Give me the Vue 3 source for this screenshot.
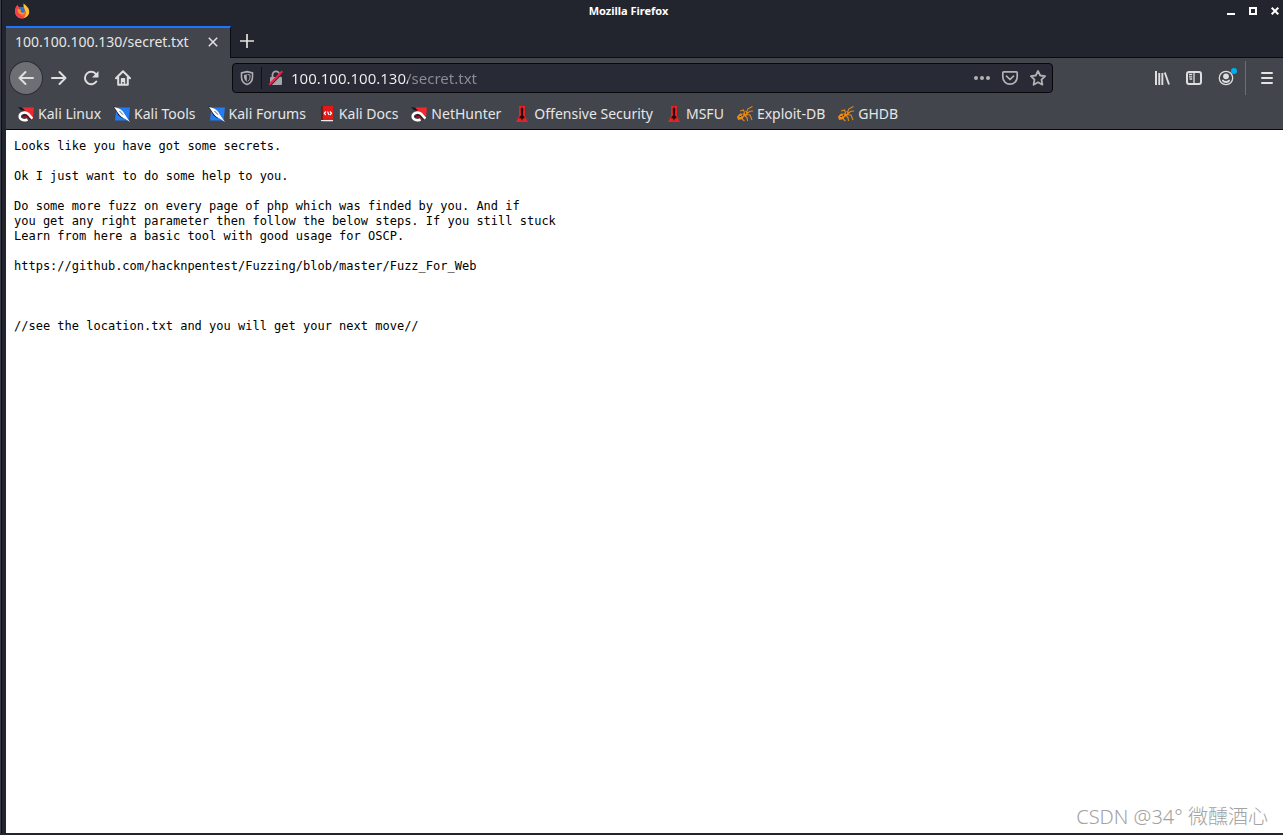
<script setup>
import { ref } from 'vue'

const address = ref('100.100.100.130/secret.txt')

const bookmarks = [
  { label: 'Kali Linux', icon: 'dragon' },
  { label: 'Kali Tools', icon: 'tools' },
  { label: 'Kali Forums', icon: 'tools' },
  { label: 'Kali Docs', icon: 'docs' },
  { label: 'NetHunter', icon: 'dragon' },
  { label: 'Offensive Security', icon: 'offsec' },
  { label: 'MSFU', icon: 'offsec' },
  { label: 'Exploit-DB', icon: 'bug' },
  { label: 'GHDB', icon: 'bug' },
]

const documentText = `Looks like you have got some secrets.

Ok I just want to do some help to you.

Do some more fuzz on every page of php which was finded by you. And if
you get any right parameter then follow the below steps. If you still stuck
Learn from here a basic tool with good usage for OSCP.

https://github.com/hacknpentest/Fuzzing/blob/master/Fuzz_For_Web



//see the location.txt and you will get your next move//`
</script>

<template>
  <div class="window">
    <header class="titlebar">
      <svg class="logo" viewBox="0 0 16 16" aria-hidden="true">
        <path d="M1 8.500C1 5.500 2 3.500 3.500 2L4.500 4L6.500 4.500L12 4L14.500 5.500C16.500 11 12.500 15.500 8 15.500S1 12 1 8.500Z" fill="#ff5a36" />
        <path d="M1 8.500C1 5.500 2 3.500 3.500 2L4.500 4L4 8L7 12.500L11 14.800C6 17 1 13 1 8.500Z" fill="#f0404f" />
        <path d="M9.500 .5C12 2.200 15.200 5 15.200 9C15.200 12 12.500 14.600 9.500 15C12 12.500 12.500 10 11.500 8C10.500 6 9 4 9.500 .5Z" fill="#ffc42c" />
        <path d="M5 4.500C7 3 9.500 4 10.500 6C11.500 8.500 10 10.500 8 10.500C6 10.500 4.500 9 5 7Z" fill="#2673dd" />
        <path d="M3.500 6L7.500 6.800L6.300 8.200L8 9.800L11 9.500C10 12.500 5 12 4 9Z" fill="#ff9226" />
      </svg>
      <h1 class="title">Mozilla Firefox</h1>
      <div class="window-controls">
        <button type="button" aria-label="Minimize">
          <svg viewBox="0 0 8 8"><path d="M0 6h8v2H0z" fill="#fff" /></svg>
        </button>
        <button type="button" aria-label="Maximize">
          <svg viewBox="0 0 8 8"><path d="M1 1h6v6H1z" fill="none" stroke="#fff" stroke-width="2" /></svg>
        </button>
        <button type="button" aria-label="Close window">
          <svg viewBox="0 0 8 8"><path d="M.7.7l6.600 6.600M7.300.7L.7 7.300" stroke="#fff" stroke-width="2" /></svg>
        </button>
      </div>
    </header>

    <div class="tabs">
      <div class="tab">
        <span class="tab-label">100.100.100.130/secret.txt</span>
        <button type="button" class="tab-close" aria-label="Close tab">
          <svg viewBox="0 0 10 10"><path d="M.8.8l8.400 8.400M9.200.8L.8 9.200" stroke="#e2e2e2" stroke-width="1.500" /></svg>
        </button>
      </div>
      <button type="button" class="new-tab" aria-label="New tab">
        <svg viewBox="0 0 14 14"><path d="M7 0v14M0 7h14" stroke="#e2e2e2" stroke-width="1.700" /></svg>
      </button>
    </div>

    <nav class="toolbar" aria-label="Navigation">
      <div class="nav-group">
        <button type="button" class="tool back" aria-label="Back">
          <svg viewBox="0 0 16 16"><path d="M15 8H1.500M7.500 2L1.500 8l6 6" class="line" /></svg>
        </button>
        <button type="button" class="tool" aria-label="Forward">
          <svg viewBox="0 0 16 16"><path d="M1 8h13.500M8.500 2l6 6-6 6" class="line" /></svg>
        </button>
        <button type="button" class="tool" aria-label="Reload">
          <svg viewBox="0 0 16 16">
            <path d="M13.300 11.500A6.200 6.200 0 1 1 13 4.200" class="line" />
            <path d="M15.500 1v6.500H9z" fill="#dededf" />
          </svg>
        </button>
        <button type="button" class="tool" aria-label="Home">
          <svg viewBox="0 0 16 16">
            <path d="M1 8.200L8 1.300l7 6.900M3.200 7v7.700h9.600V7" class="line" />
            <path d="M5.800 14V9q0-1 1-1h2.400q1 0 1 1v5H8.700v-2H7.300v2z" fill="#dededf" />
          </svg>
        </button>
      </div>

      <form class="urlbar" @submit.prevent>
        <button type="button" class="mini shield" aria-label="Tracking protection">
          <svg viewBox="0 0 16 16">
            <path d="M8 1.600l5.500 1.300v4C13.500 10.500 11 13.500 8 14.500 5 13.500 2.500 10.500 2.500 6.900v-4z" fill="none" stroke="#aeaeb2" stroke-width="1.600" />
            <path d="M7.800 4.200v7.500C6 10.500 5 8.800 5 6.800V4.900z" fill="#aeaeb2" />
            <path d="M8.500 4.400l2.500.6v2c0 2-1 3.700-2.500 4.700" fill="none" stroke="#aeaeb2" />
          </svg>
        </button>
        <button type="button" class="mini lock" aria-label="Connection is not secure">
          <svg viewBox="0 0 16 16">
            <path d="M4.500 8V4.800a3.500 3.500 0 0 1 7 0V8" fill="none" stroke="#a5a5aa" stroke-width="1.800" />
            <rect x="2" y="7" width="12" height="8" rx="1" fill="#a5a5aa" />
            <path d="M2.300 15.500L15 2.500" stroke="#282a35" stroke-width="1.500" />
            <path d="M1.300 14.800L14.300 1.300" stroke="#f02046" stroke-width="2" />
          </svg>
        </button>
        <input v-model="address" class="address" type="text" aria-label="Address" spellcheck="false" />
        <div class="page-actions">
          <button type="button" class="mini" aria-label="Page actions">
            <svg viewBox="0 0 16 16" fill="#b2b2b5"><circle cx="2" cy="8" r="2" /><circle cx="8" cy="8" r="2" /><circle cx="14" cy="8" r="2" /></svg>
          </button>
          <button type="button" class="mini" aria-label="Save to Pocket">
            <svg viewBox="0 0 16 16" fill="none" stroke="#b2b2b5" stroke-width="1.700" stroke-linejoin="round" stroke-linecap="round">
              <path d="M1.800 1.800h12.400q1 0 1 1V7a7.200 7.200 0 0 1-14.400 0V2.800q0-1 1-1z" /><path d="M4.500 6.200L8 9.500l3.500-3.300" />
            </svg>
          </button>
          <button type="button" class="mini" aria-label="Bookmark this page">
            <svg viewBox="0 0 16 16" fill="none" stroke="#b2b2b5" stroke-width="1.800" stroke-linejoin="round">
              <path d="M8 1l2.200 4.500 4.900.7-3.600 3.500.9 5L8 12.300l-4.400 2.400.9-5L.9 6.200l4.900-.7z" />
            </svg>
          </button>
        </div>
      </form>

      <div class="tool-group">
        <button type="button" class="tool" aria-label="Library">
          <svg viewBox="0 0 16 16" fill="#dededf"><path d="M1 1h2v14H1zM4.300 3h1.900v12H4.300zM7.400 3h1.900v12H7.400z" /><path d="M10.800 2.500L15 14.500" stroke="#dededf" stroke-width="1.900" /></svg>
        </button>
        <button type="button" class="tool" aria-label="Sidebars">
          <svg viewBox="0 0 16 16"><rect x="1" y="2" width="14" height="12" rx="2" fill="none" stroke="#dededf" stroke-width="2" /><path d="M8 2v12M3 4.500h3.200M3 6.800h3.200M3.500 9h2.700" stroke="#dededf" stroke-width="1.300" /></svg>
        </button>
        <button type="button" class="tool account" aria-label="Firefox account">
          <svg viewBox="0 0 16 16">
            <circle cx="8" cy="8" r="6.700" fill="none" stroke="#dededf" stroke-width="1.300" />
            <circle cx="8" cy="6.300" r="2.900" fill="#dededf" />
            <path d="M3.800 9.800h1.500Q8 12.200 10.700 9.800h1.500Q11.500 13 8 13T3.800 9.800z" fill="#dededf" />
          </svg>
          <span class="dot"></span>
        </button>
        <span class="divider"></span>
        <button type="button" class="tool menu" aria-label="Open menu">
          <svg viewBox="0 0 16 16"><path d="M3 3h10M3 8h10M3 13h10" stroke="#e4e4e4" stroke-width="2" stroke-linecap="round" /></svg>
        </button>
      </div>
    </nav>

    <nav class="bookmarks" aria-label="Bookmarks">
      <a v-for="item in bookmarks" :key="item.label" href="#">
        <svg v-if="item.icon === 'dragon'" viewBox="0 0 16 16">
          <path d="M4.500 1.500H16L14.800 13 11 9 6 6z" fill="#f2282f" />
          <path d="M0 1l4 .7 3.500 3.300L3 4z" fill="#15151b" />
          <path d="M4 9.500l5-1 4 5-3-1.500-2 1z" fill="#a30f1b" />
          <path d="M9.500 13.500C5 15.500 1.500 13 1.700 10.200 2 7 6 5.800 9 7.200c2.500 1.100 3 3.800 5.500 5.300" fill="none" stroke="#fff" stroke-width="2.500" />
          <path d="M4 11.500C4 8.800 7.500 8.600 9 9.800l3.500 4" fill="none" stroke="#17171c" />
        </svg>
        <svg v-else-if="item.icon === 'tools'" viewBox="0 0 16 16">
          <path d="M2.500 1.500H16L14.500 14.500H1z" fill="#237cf2" />
          <path d="M0 .5l2 3.200L5 9l4 3" fill="none" stroke="#17171c" stroke-width="1.200" />
          <path d="M0 1C5 2 8.500 3.800 10.500 8l3 4.500L16 16l-4.500-3L8 11.300C4.500 9 3.500 5.500 0 1z" fill="#fff" />
          <path d="M5.500 5L9 8.700" stroke="#59616f" />
        </svg>
        <svg v-else-if="item.icon === 'docs'" viewBox="0 0 16 16">
          <path d="M2 0h12v16H2z" fill="#e51717" /><path d="M2 0h2v16H2z" fill="#7c1515" /><path d="M2 14h12v1.200H2z" fill="#eee" />
          <path d="M6.800 5.500L5.300 7.300l1.500 1.700M8.500 5.500L10 9M11 5.500l1.500 1.800L11 9" fill="none" stroke="#fff" stroke-width="1.200" />
        </svg>
        <svg v-else-if="item.icon === 'offsec'" viewBox="0 0 16 16">
          <path d="M5 0h6v10l3 6H2l3-6z" fill="#e42325" />
          <path d="M8 1l1.300 2-.4 6L11 12l-2.200.5L8 15l-.8-2.500L5 12l2.100-3-.4-6z" fill="#210b0d" />
        </svg>
        <svg v-else viewBox="0 0 16 16">
          <path d="M0 10.500L3 7.500l3 .3 2.500-2.600 3 1.300-1.500 2.800-3 1L5.500 13 1 14z" fill="#ef8a17" />
          <path d="M9.500 6L11 2.800 15.500.5M10.500 7l2.500-1.800 3-.2M9.500 8.800l3.500.2 2 5M7.500 9.500l2.500 2 .5 3.500M7.500 7L6.500 4 3 5M5 11.500l.5 2L7.500 15" fill="none" stroke="#e18a22" stroke-width="1.100" />
          <path d="M2.500 10.500h1.700M5 10l1-1.500M8 7.500l1-1" stroke="#452a12" stroke-width="1.200" />
        </svg>
        <span>{{ item.label }}</span>
      </a>
    </nav>

    <main class="page">
      <pre>{{ documentText }}</pre>
      <p class="watermark">CSDN @34° 微醺酒心</p>
    </main>
  </div>
</template>

<style>
body {
  margin: 0;
  background: #23252e;
}
</style>

<style scoped>
.window {
  box-sizing: border-box;
  min-height: 100vh;
  display: flex;
  flex-direction: column;
  border-bottom: 2px solid #23252e;
  padding-left: 6px;
  background: linear-gradient(90deg, #3b3e48 0 1px, #0c0e16 1px 2px, #23252e 2px);
  color: #e6e6e6;
  font-family: "Noto Sans", "Noto Sans CJK SC", sans-serif;
  font-size: 14px;
}
button {
  display: grid;
  place-items: center;
  flex: none;
  margin: 0;
  padding: 0;
  border: 0;
  background: none;
}
svg {
  display: block;
  overflow: visible;
}
.titlebar {
  display: grid;
  grid-template-columns: auto 1fr auto;
  align-items: center;
  height: 22px;
  padding: 0 4px 4px 8px;
}
.logo {
  width: 16px;
  height: 16px;
}
.title {
  margin: 0;
  color: #fff;
  font-size: 11px;
  line-height: 22px;
  font-weight: 700;
  text-align: center;
}
.window-controls {
  display: flex;
  justify-content: flex-end;
  gap: 14px;
}
.window-controls svg {
  width: 8px;
  height: 8px;
}
.tabs {
  display: flex;
  height: 31px;
  border-bottom: 1px solid #0b0c12;
}
.tab {
  box-sizing: border-box;
  display: flex;
  align-items: center;
  justify-content: space-between;
  width: 225px;
  height: 32px;
  margin-bottom: -1px;
  padding: 0 12px 3px 9px;
  border-top: 2px solid #1f75fe;
  border-right: 1px solid #0b0c12;
  background: #42454c;
}
.tab-close svg {
  width: 10px;
  height: 10px;
}
.new-tab {
  width: 32px;
  height: 30px;
}
.new-tab svg {
  width: 14px;
  height: 14px;
}
.toolbar {
  display: flex;
  align-items: center;
  height: 40px;
  background: #42454c;
}
.nav-group {
  display: flex;
  flex: 0 0 226px;
  box-sizing: border-box;
  padding-left: 4px;
}
.tool {
  width: 32px;
  height: 32px;
}
.tool svg,
.mini svg {
  width: 16px;
  height: 16px;
}
.line {
  fill: none;
  stroke: #dededf;
  stroke-width: 2;
  stroke-linecap: round;
  stroke-linejoin: round;
}
.back {
  margin-right: 1px;
  border-radius: 50%;
  background: #6d6f74;
  box-shadow: 0 0 0 1px #2c2e35;
}
.urlbar {
  box-sizing: border-box;
  display: flex;
  flex: 1;
  align-items: center;
  height: 30px;
  border: 1px solid #07080c;
  border-radius: 4px;
  background: #282a35;
}
.mini {
  width: 28px;
  height: 28px;
}
.shield {
  width: 29px;
  height: 22px;
  border-right: 1px solid #101118;
}
.address {
  flex: 1;
  min-width: 0;
  height: 28px;
  padding: 0;
  border: 0;
  margin-left: 1px;
  outline: 0;
  background: linear-gradient(90deg, #f2f2f2 117px, #8c8d94 117px);
  background-clip: text;
  color: transparent;
  font: inherit;
  font-size: 15px;
}
.page-actions {
  display: flex;
}
.tool-group {
  display: flex;
  align-items: center;
  flex: 0 0 230px;
  justify-content: flex-end;
}
.account {
  position: relative;
}
.dot {
  position: absolute;
  top: 6px;
  right: 5px;
  width: 6px;
  height: 6px;
  border-radius: 50%;
  background: #00aef5;
}
.divider {
  width: 1px;
  height: 34px;
  margin: 0 5px 0 3px;
  background: #6c6f76;
}
.bookmarks {
  display: flex;
  align-items: center;
  gap: 13px;
  height: 31px;
  padding-left: 12px;
  border-bottom: 1px solid #07080c;
  background: #42454c;
}
.bookmarks a {
  display: flex;
  align-items: center;
  gap: 4px;
  color: inherit;
  text-decoration: none;
  white-space: nowrap;
}
.bookmarks svg {
  width: 16px;
  height: 16px;
}
.page {
  display: flex;
  flex: 1;
  flex-direction: column;
  justify-content: space-between;
  background: #fff;
  color: #000;
}
pre {
  margin: 9px 8px 8px;
  font: 12px/15px "DejaVu Sans Mono", monospace;
}
.watermark {
  align-self: flex-end;
  margin: 0 15px 3px;
  color: #a2a2a2;
  font: 300 20px/26px "Noto Sans", "Noto Sans CJK SC", sans-serif;
}
</style>
